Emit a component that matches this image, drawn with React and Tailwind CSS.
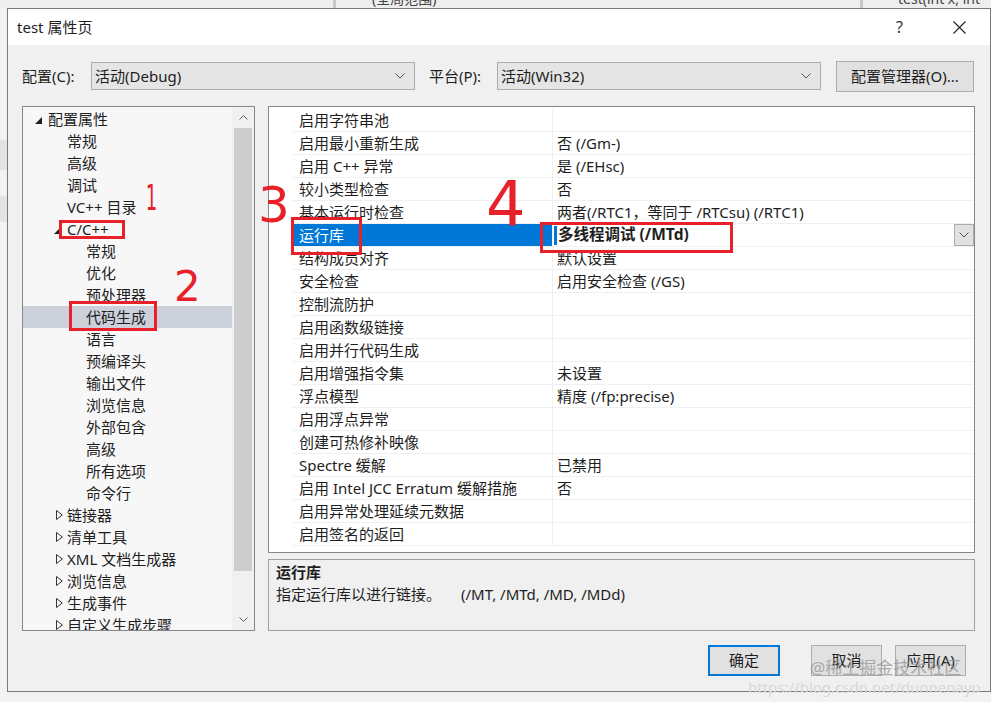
import React from "react";

const treeRows = [
  { t: "配置属性", lv: 0, tri: "open" },
  { t: "常规", lv: 1 },
  { t: "高级", lv: 1 },
  { t: "调试", lv: 1 },
  { t: "VC++ 目录", lv: 1 },
  { t: "C/C++", lv: 1, tri: "open" },
  { t: "常规", lv: 2 },
  { t: "优化", lv: 2 },
  { t: "预处理器", lv: 2 },
  { t: "代码生成", lv: 2, sel: true },
  { t: "语言", lv: 2 },
  { t: "预编译头", lv: 2 },
  { t: "输出文件", lv: 2 },
  { t: "浏览信息", lv: 2 },
  { t: "外部包含", lv: 2 },
  { t: "高级", lv: 2 },
  { t: "所有选项", lv: 2 },
  { t: "命令行", lv: 2 },
  { t: "链接器", lv: 1, tri: "closed" },
  { t: "清单工具", lv: 1, tri: "closed" },
  { t: "XML 文档生成器", lv: 1, tri: "closed" },
  { t: "浏览信息", lv: 1, tri: "closed" },
  { t: "生成事件", lv: 1, tri: "closed" },
  { t: "自定义生成步骤", lv: 1, tri: "closed" },
];

const props = [
  ["启用字符串池", ""],
  ["启用最小重新生成", "否 (/Gm-)"],
  ["启用 C++ 异常", "是 (/EHsc)"],
  ["较小类型检查", "否"],
  ["基本运行时检查", "两者(/RTC1，等同于 /RTCsu) (/RTC1)"],
  ["运行库", "多线程调试 (/MTd)", true],
  ["结构成员对齐", "默认设置"],
  ["安全检查", "启用安全检查 (/GS)"],
  ["控制流防护", ""],
  ["启用函数级链接", ""],
  ["启用并行代码生成", ""],
  ["启用增强指令集", "未设置"],
  ["浮点模型", "精度 (/fp:precise)"],
  ["启用浮点异常", ""],
  ["创建可热修补映像", ""],
  ["Spectre 缓解", "已禁用"],
  ["启用 Intel JCC Erratum 缓解措施", "否"],
  ["启用异常处理延续元数据", ""],
  ["启用签名的返回", ""],
];

function Chevron({ className }) {
  return (
    <svg width="10" height="6" viewBox="0 0 10 6" className={className}>
      <polyline points="0.5,0.5 5,5 9.5,0.5" fill="none" stroke="#555" strokeWidth="1" />
    </svg>
  );
}

function Combo({ text }) {
  return (
    <div className="w-[324px] h-[28px] border border-[#adadad] bg-[#e5e5e5] flex items-center pl-[3px] pr-[9px]">
      <span className="flex-1">{text}</span>
      <Chevron />
    </div>
  );
}

function TreeRow({ row }) {
  return (
    <div className={"h-[22px] flex items-center " + (row.sel ? "bg-[#ccd0da]" : "")}>
      <div
        className={
          "w-[13px] flex items-center " +
          (row.lv === 0 ? "ml-[12px]" : row.lv === 1 ? "ml-[31px]" : "ml-[50px]")
        }
      >
        {row.tri === "open" && (
          <svg width="7" height="7" viewBox="0 0 7 7" className="mt-[2px]">
            <polygon points="7,0 7,7 0,7" fill="#1e1e1e" />
          </svg>
        )}
        {row.tri === "closed" && (
          <svg width="7" height="10" viewBox="0 0 7 10" className="ml-[2px]">
            <polygon points="0.5,0.5 6.3,5 0.5,9.5" fill="none" stroke="#333" strokeWidth="1" />
          </svg>
        )}
      </div>
      <span className="whitespace-nowrap">{row.t}</span>
    </div>
  );
}

function PropRow({ name, value, sel }) {
  return (
    <div className="h-[23px] flex">
      <div className="w-[24px] bg-white" />
      <div
        className={
          "w-[260px] flex items-center pl-[6px] border-b border-r border-[#f0f0f0] whitespace-nowrap " +
          (sel ? "bg-[#0078d7] text-white border-[#0078d7]" : "")
        }
      >
        {name}
      </div>
      <div className="flex-1 flex items-center border-b border-[#f0f0f0] whitespace-nowrap">
        {sel ? (
          <div className="flex-1 h-full flex items-center">
            <div className="w-[3px] h-[19px] bg-[#0078d7] ml-[1px]" />
            <span className="ml-[1px] font-bold text-[15.5px] flex-1">{value}</span>
            <div className="w-[20px] h-[22px] bg-[#e1e1e1] border border-[#adadad] flex items-center justify-center">
              <Chevron />
            </div>
          </div>
        ) : (
          <span className="pl-[4px]">{value}</span>
        )}
      </div>
    </div>
  );
}

function Btn({ children, def, className = "" }) {
  return (
    <div
      className={
        "h-[31px] flex items-center justify-center bg-[#e1e1e1] " +
        (def ? "border-2 border-[#0078d7] " : "border border-[#adadad] ") +
        className
      }
    >
      {children}
    </div>
  );
}

export default function App() {
  return (
    <div className="relative w-[991px] h-[702px] overflow-hidden bg-[#f2f2f2] text-[15px] text-[#1e1e1e] font-['Noto_Sans','Noto_Sans_CJK_SC',sans-serif]">
      {/* editor behind */}
      <div className="absolute left-0 top-0 w-[991px] h-[8px] bg-[#eeeeee]">
        <div className="absolute left-[333px] top-0 w-[3px] h-[8px] bg-[#c8c8c8]" />
        <span className="absolute left-[372px] top-[-12px] text-[14px] text-[#444]">(全局范围)</span>
        <div className="absolute left-[860px] top-0 w-[3px] h-[8px] bg-[#c8c8c8]" />
        <span className="absolute left-[898px] top-[-12px] text-[14px] text-[#444]">test(int x, int</span>
      </div>
      <div className="absolute left-0 top-[140px] w-[7px] h-[30px] bg-[#e3e3e3]" />
      <div className="absolute left-0 top-[196px] w-[7px] h-[26px] bg-[#e3e3e3]" />

      {/* dialog window */}
      <div className="absolute left-[7px] top-[8px] w-[984px] h-[684px] border border-[#7a7a7a] bg-[#f0f0f0] flex flex-col">
        <div className="h-[36px] bg-white flex items-center pl-[9px]">
          <span className="flex-1">test 属性页</span>
          <span className="w-[20px] text-[16px] text-[#333]">?</span>
          <svg width="13" height="13" viewBox="0 0 13 13" className="ml-[37px] mr-[24px]">
            <path d="M0.5 0.5 L12.5 12.5 M12.5 0.5 L0.5 12.5" stroke="#222" strokeWidth="1.1" />
          </svg>
        </div>

        <div className="flex flex-col pl-[14px] pt-[16px]">
          <div className="h-[30px] flex items-center">
            <span className="w-[69px]">配置(C):</span>
            <Combo text="活动(Debug)" />
            <span className="w-[68px] ml-[14px]">平台(P):</span>
            <Combo text="活动(Win32)" />
            <Btn className="w-[138px] h-[30px] ml-[15px] border-[#adadad]">配置管理器(O)...</Btn>
          </div>

          <div className="flex gap-[13px] mt-[15px] h-[525px]">
            {/* tree */}
            <div className="w-[233px] border border-[#828790] bg-[#f7f7f8] flex overflow-hidden">
              <div className="flex-1 pt-[1px] overflow-hidden">
                {treeRows.map((r, i) => (
                  <TreeRow key={i} row={r} />
                ))}
              </div>
              <div className="w-[22px] bg-[#f0f0f0] flex flex-col items-center">
                <div className="h-[21px] flex items-center">
                  <svg width="9" height="5" viewBox="0 0 9 5">
                    <polyline points="0.5,4.5 4.5,0.5 8.5,4.5" fill="none" stroke="#606060" />
                  </svg>
                </div>
                <div className="w-[18px] h-[443px] bg-[#cdcdcd]" />
                <div className="flex-1" />
                <div className="h-[21px] flex items-center">
                  <svg width="9" height="5" viewBox="0 0 9 5">
                    <polyline points="0.5,0.5 4.5,4.5 8.5,0.5" fill="none" stroke="#606060" />
                  </svg>
                </div>
              </div>
            </div>

            {/* property grid + description */}
            <div className="w-[707px] flex flex-col">
              <div className="h-[447px] border border-[#828790] bg-white pt-[2px] overflow-hidden">
                {props.map(([n, v, s], i) => (
                  <PropRow key={i} name={n} value={v} sel={s} />
                ))}
              </div>
              <div className="mt-[6px] flex-1 border border-[#a0a0a0] bg-[#f0f0f0] pl-[7px] pt-[1px]">
                <div className="font-bold leading-[22px]">运行库</div>
                <div className="leading-[23px] flex">
                  <span>指定运行库以进行链接。</span>
                  <span className="ml-[20px]">(/MT, /MTd, /MD, /MDd)</span>
                </div>
              </div>
            </div>
          </div>

          <div className="flex mt-[14px] pl-[686px] gap-[31px]">
            <Btn def className="w-[72px]">确定</Btn>
            <div className="flex gap-[13px]">
              <Btn className="w-[71px]">取消</Btn>
              <Btn className="w-[71px]">应用(A)</Btn>
            </div>
          </div>
        </div>
      </div>

      {/* watermark */}
      <span className="absolute left-[810px] top-[655px] text-[17px] text-[#9a9a9a] opacity-80 whitespace-nowrap">@稀土掘金技术社区</span>
      <span className="absolute left-[748px] top-[676px] text-[15px] text-[#d8d8d8] whitespace-nowrap">https://blog.csdn.net/dunnenayo</span>

      {/* red annotations */}
      <div className="absolute left-[59px] top-[220px] w-[66px] h-[19px] border-[3px] border-[#e8202a]" />
      <div className="absolute left-[69px] top-[301px] w-[88px] h-[30px] border-[3px] border-[#e8202a]" />
      <div className="absolute left-[291px] top-[217px] w-[71px] h-[38px] border-[3px] border-[#e8202a]" />
      <div className="absolute left-[540px] top-[222px] w-[193px] h-[31px] border-[3px] border-[#e8202a]" />
      <span className="absolute left-[140px] top-[180px] text-[36px] leading-none text-[#e8202a] font-['DejaVu_Sans'] scale-x-50">1</span>
      <span className="absolute left-[174px] top-[266px] text-[42px] leading-none text-[#e8202a] font-['DejaVu_Sans']">2</span>
      <span className="absolute left-[258px] top-[180px] text-[50px] leading-none text-[#e8202a] font-['DejaVu_Sans']">3</span>
      <span className="absolute left-[486px] top-[174px] text-[62px] leading-none text-[#e8202a] font-['DejaVu_Sans']">4</span>
    </div>
  );
}
